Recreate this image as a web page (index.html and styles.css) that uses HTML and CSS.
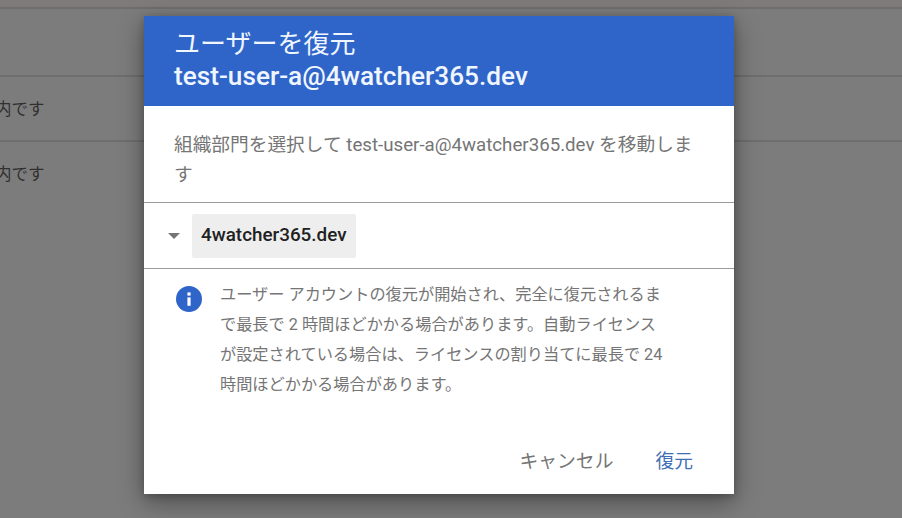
FILE: index.html
```html
<!DOCTYPE html>
<html lang="ja">
<head>
<meta charset="utf-8">
<title>ユーザーを復元</title>
<link rel="stylesheet" href="styles.css">
</head>
<body>
<main class="page">
  <div class="row row-top"></div>
  <div class="row row-head"></div>
  <div class="row row-item"><span class="row-text">内です</span></div>
  <div class="row-item row-last"><span class="row-text">内です</span></div>
</main>
<section class="dialog">
  <header class="dialog-head">
    <div class="dialog-title">ユーザーを復元</div>
    <div class="dialog-email">test-user-a@4watcher365.dev</div>
  </header>
  <p class="lead">組織部門を選択して test-user-a@4watcher365.dev を移動します</p>
  <div class="tree">
    <span class="caret"></span>
    <span class="chip">4watcher365.dev</span>
  </div>
  <div class="note">
    <svg class="info" viewBox="0 0 26 26" aria-hidden="true">
      <circle cx="13" cy="13" r="13" fill="#2f65c9"/>
      <rect x="11.4" y="6.4" width="3.2" height="3.2" fill="#fff"/>
      <rect x="11.4" y="11.4" width="3.2" height="8.4" fill="#fff"/>
    </svg>
    <p class="note-text">ユーザー アカウントの復元が開始され、完全に復元されるまで最長で 2 時間ほどかかる場合があります。自動ライセンスが設定されている場合は、ライセンスの割り当てに最長で 24 時間ほどかかる場合があります。</p>
  </div>
  <footer class="actions">
    <span class="btn btn-cancel">キャンセル</span>
    <span class="btn btn-ok">復元</span>
  </footer>
</section>
</body>
</html>
```
FILE: styles.css
```css
* { box-sizing: border-box; }
html, body { margin: 0; height: 100%; }
body {
  width: 902px;
  height: 518px;
  overflow: hidden;
  position: relative;
  background: #7c7c7c;
  font-family: Roboto, "Noto Sans CJK JP", sans-serif;
}
.page { display: flex; flex-direction: column; }
.row { border-bottom: 2px solid #6e6e6e; }
.row-top { height: 9px; background: #7f7b7b; }
.row-head { height: 68px; }
.row-item { height: 65px; display: flex; align-items: center; }
.row-last { height: 63px; }
.row-text {
  margin-left: -5px;
  font-size: 16.5px;
  color: #303030;
  position: relative;
  top: -1px;
}
.dialog {
  position: absolute;
  left: 144px;
  top: 16px;
  width: 590px;
  height: 478px;
  display: flex;
  flex-direction: column;
  background: #fff;
  box-shadow: 0 8px 24px rgba(0, 0, 0, .38), 0 2px 8px rgba(0, 0, 0, .2);
}
.dialog-head {
  height: 90px;
  padding: 10px 30px 0;
  background: #2f65c9;
  color: #fff;
}
.dialog-title { font-size: 26px; line-height: 36px; color: #f0f6ff; }
.dialog-email { font-size: 26.2px; line-height: 29px; font-weight: 500; color: #f0f6ff; }
.lead {
  margin: 0;
  height: 96px;
  padding: 24px 30px 0 30px;
  font-size: 18.7px;
  line-height: 30px;
  color: #757575;
}
.tree {
  height: 67px;
  display: flex;
  align-items: center;
  padding-left: 24px;
  border-top: 1px solid #9a9a9a;
  border-bottom: 1px solid #9a9a9a;
}
.caret {
  width: 0;
  height: 0;
  border-left: 6px solid transparent;
  border-right: 6px solid transparent;
  border-top: 6px solid #757575;
}
.chip {
  margin-left: 12px;
  height: 44px;
  padding: 0 9px 2px;
  display: flex;
  align-items: center;
  background: #eeeeee;
  border-radius: 2px;
  font-size: 18.85px;
  font-weight: 500;
  color: #212121;
}
.note {
  display: flex;
  padding: 17px 0 0 32px;
  height: 170px;
}
.info { width: 26px; height: 26px; flex: none; }
.note-text {
  margin: -6px 0 0 18px;
  width: 446px;
  font-size: 16.2px;
  line-height: 30px;
  color: #757575;
}
.actions {
  display: flex;
  justify-content: flex-end;
  align-items: center;
  gap: 42px;
  height: 40px;
  padding-right: 41px;
  font-size: 18.8px;
}
.btn-cancel { color: #757575; }
.btn-ok { color: #3f6fb5; }
```
